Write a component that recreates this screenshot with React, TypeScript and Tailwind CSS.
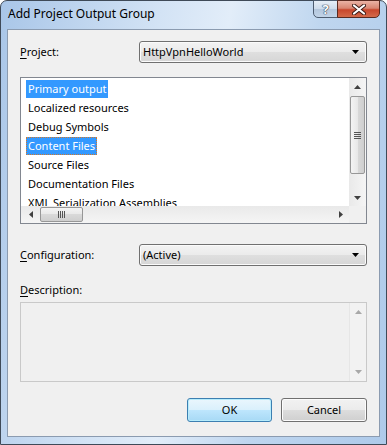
import React from 'react';

const font = { fontFamily: '"Noto Sans", "Open Sans", sans-serif' };

const items = [
  'Primary output',
  'Localized resources',
  'Debug Symbols',
  'Content Files',
  'Source Files',
  'Documentation Files',
  'XML Serialization Assemblies',
];

const Arrow: React.FC<{ dir: 'up' | 'down' | 'left' | 'right'; color?: string }> = ({ dir, color = '#404040' }) => {
  const vertical = dir === 'up' || dir === 'down';
  const pts = {
    up: '0,4 3.5,0 7,4',
    down: '0,0 7,0 3.5,4',
    left: '4,0 4,7 0,3.5',
    right: '0,0 4,3.5 0,7',
  }[dir];
  return (
    <svg width={vertical ? 7 : 4} height={vertical ? 4 : 7} viewBox={vertical ? '0 0 7 4' : '0 0 4 7'}>
      <polygon points={pts} fill={color} />
    </svg>
  );
};

const Combo: React.FC<{ value: string }> = ({ value }) => (
  <div className="flex h-[22px] flex-1 items-center justify-between rounded-[3px] border border-[#707070] bg-[linear-gradient(to_bottom,#f3f3f3_0%,#ebebeb_50%,#dfdfdf_50%,#d6d6d6_100%)] pl-[3px] pr-[7px] shadow-[inset_0_0_0_1px_#fbfbfb]">
    <span className="text-black">{value}</span>
    <svg width="7" height="4" viewBox="0 0 7 4">
      <polygon points="0,0 7,0 3.5,4" fill="#000" />
    </svg>
  </div>
);

const Label: React.FC<{ k: string; rest: string }> = ({ k, rest }) => (
  <span className="text-black">
    <span className="underline decoration-1 underline-offset-2">{k}</span>
    {rest}
  </span>
);

const VScroll: React.FC = () => (
  <div className="flex flex-1 flex-col bg-[linear-gradient(to_right,#e9e9e9,#f5f5f5)]">
    <div className="flex h-[18px] items-center justify-center">
      <Arrow dir="up" />
    </div>
    <div className="mx-px flex h-[78px] items-center justify-center rounded-[2px] border border-[#979797] bg-[linear-gradient(to_right,#f4f4f4,#e8e8e8_50%,#d9d9d9_50%,#cfcfcf)]">
      <svg width="7" height="7" viewBox="0 0 7 7">
        <rect x="0" y="0" width="7" height="1" fill="#555" />
        <rect x="0" y="2" width="7" height="1" fill="#555" />
        <rect x="0" y="4" width="7" height="1" fill="#555" />
        <rect x="0" y="6" width="7" height="1" fill="#555" />
      </svg>
    </div>
    <div className="flex-1" />
    <div className="flex h-[17px] items-center justify-center">
      <Arrow dir="down" />
    </div>
  </div>
);

const HScroll: React.FC = () => (
  <div className="flex h-[17px] bg-[linear-gradient(to_bottom,#e9e9e9,#f5f5f5)]">
    <div className="flex w-[19px] items-center justify-center">
      <Arrow dir="left" />
    </div>
    <div className="my-px flex w-[43px] items-center justify-center rounded-[2px] border border-[#979797] bg-[linear-gradient(to_bottom,#f4f4f4,#e8e8e8_50%,#d9d9d9_50%,#cfcfcf)]">
      <svg width="7" height="7" viewBox="0 0 7 7">
        <rect x="0" y="0" width="1" height="7" fill="#555" />
        <rect x="2" y="0" width="1" height="7" fill="#555" />
        <rect x="4" y="0" width="1" height="7" fill="#555" />
        <rect x="6" y="0" width="1" height="7" fill="#555" />
      </svg>
    </div>
    <div className="flex-1" />
    <div className="flex w-[17px] items-center justify-center">
      <Arrow dir="right" />
    </div>
  </div>
);

export default function App() {
  return (
    <div
      style={font}
      className="flex h-[445px] w-[387px] flex-col rounded-t-[7px] border border-[#3f4a58] bg-[linear-gradient(100deg,#a9c6e8_0%,#d3e3f5_35%,#e2edf9_50%,#bfd6ef_70%,#aecaea_100%)] px-[6px] pb-[7px] text-[11px]"
    >
      {/* Title bar */}
      <div className="flex h-[28px] items-start justify-between">
        <div className="pl-[1px] pt-[4px] text-[12px] leading-[18px] text-black">Add Project Output Group</div>
        <div className="-mt-px flex">
          <div className="flex h-[18px] w-[25px] items-center justify-center rounded-bl-[5px] border border-[#4d5c70] bg-[linear-gradient(to_bottom,#e6eef7_0%,#cddbeb_50%,#b3c6dc_50%,#c2d4e8_100%)]">
            <span className="text-[13px] font-bold leading-none text-white [text-shadow:0_0_1px_#2b3a4e,0_0_1px_#2b3a4e,0_0_1px_#2b3a4e]">?</span>
          </div>
          <div className="-ml-px flex h-[18px] w-[43px] items-center justify-center rounded-br-[5px] border border-[#5a2a20] bg-[linear-gradient(to_bottom,#eab3a5_0%,#d88672_45%,#c8472d_55%,#d46a4a_100%)]">
            <svg width="14" height="11" viewBox="0 0 14 11">
              <path d="M2 1.5 L12 9.5 M12 1.5 L2 9.5" stroke="#3b1a14" strokeWidth="4" strokeLinecap="round" />
              <path d="M2 1.5 L12 9.5 M12 1.5 L2 9.5" stroke="#fff" strokeWidth="2.2" strokeLinecap="round" />
            </svg>
          </div>
        </div>
      </div>

      {/* Client area */}
      <div className="flex flex-1 flex-col border border-[#8b9bb0] bg-[#f0f0f0] px-[12px]">
        <div className="mt-[11px] flex h-[22px] items-center">
          <div className="w-[119px]">
            <Label k="P" rest="roject:" />
          </div>
          <Combo value="HttpVpnHelloWorld" />
        </div>

        {/* List */}
        <div className="mt-[14px] flex h-[147px] border border-[#828790] bg-white">
          <div className="flex flex-1 flex-col">
            <div className="flex-1 overflow-hidden pl-[5px] pt-px">
              {items.map((it, i) => (
                <div key={it} className="flex h-[19px] items-center">
                  <span
                    className={
                      i === 0
                        ? 'h-[18px] bg-[#3399ff] px-[2px] leading-[18px] text-white'
                        : i === 3
                        ? 'h-[18px] border border-dotted border-[#d2782a] bg-[#3399ff] px-px leading-[16px] text-white'
                        : 'h-[18px] px-[2px] leading-[18px] text-black'
                    }
                  >
                    {it}
                  </span>
                </div>
              ))}
            </div>
            <HScroll />
          </div>
          <div className="flex w-[17px] flex-col">
            <VScroll />
            <div className="h-[17px] bg-[#f0f0f0]" />
          </div>
        </div>

        <div className="mt-[20px] flex h-[22px] items-center">
          <div className="w-[119px]">
            <Label k="C" rest="onfiguration:" />
          </div>
          <Combo value="(Active)" />
        </div>

        <div className="mt-[16px] flex h-[16px] items-center">
          <Label k="D" rest="escription:" />
        </div>

        {/* Description */}
        <div className="mt-[4px] flex h-[80px] border border-[#c9c9c9] bg-[#f0f0f0]">
          <div className="flex-1" />
          <div className="flex w-[17px] flex-col border-l border-[#e6e6e6] bg-[#f2f2f2]">
            <div className="flex h-[18px] items-center justify-center">
              <Arrow dir="up" color="#a8a8a8" />
            </div>
            <div className="flex-1" />
            <div className="flex h-[18px] items-center justify-center">
              <Arrow dir="down" color="#a8a8a8" />
            </div>
          </div>
        </div>

        {/* Buttons */}
        <div className="mt-[16px] flex justify-end gap-[9px]">
          <button className="flex h-[24px] w-[85px] items-center justify-center rounded-[3px] border border-[#3c7fb1] bg-[linear-gradient(to_bottom,#eaf6fd_0%,#d9f0fc_50%,#bee6fd_50%,#a7d9f5_100%)] text-black shadow-[inset_0_0_0_1px_#b6ecfc]">
            OK
          </button>
          <button className="flex h-[24px] w-[86px] items-center justify-center rounded-[3px] border border-[#707070] bg-[linear-gradient(to_bottom,#f2f2f2_0%,#ebebeb_50%,#dddddd_50%,#cfcfcf_100%)] text-black shadow-[inset_0_0_0_1px_#fcfcfc]">
            Cancel
          </button>
        </div>
      </div>
    </div>
  );
}
